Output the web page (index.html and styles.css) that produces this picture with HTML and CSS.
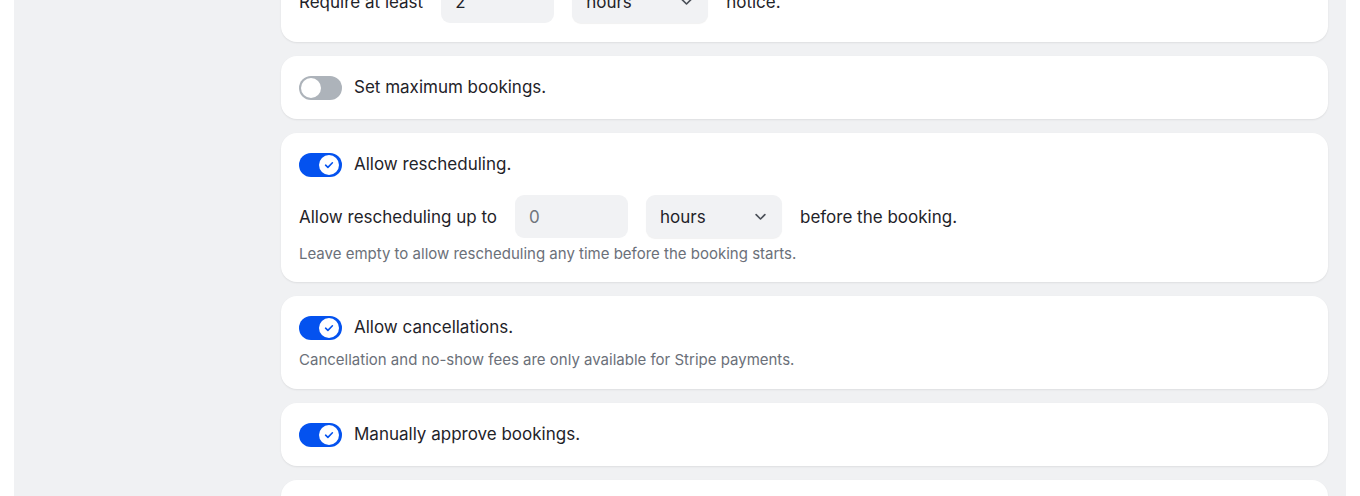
FILE: index.html
```html
<!DOCTYPE html>
<html lang="en">
<head>
  <meta charset="UTF-8" />
  <meta name="viewport" content="width=device-width, initial-scale=1.0"/>
  <title>Booking Settings</title>
  <link rel="stylesheet" href="styles.css">
</head>
<body>

  <div class="page">
    <div class="settings">

      <!-- Notice -->
      <div class="card">
        <div class="card-head">
          <span class="toggle on"><span class="knob"><svg viewBox="0 0 12 12"><path d="M2.6 6.2l2.3 2.2 4.5-4.6"/></svg></span></span>
          <span class="label">Require booking notice.</span>
        </div>
        <div class="field-row">
          <span>Require at least</span>
          <div class="input">2</div>
          <div class="select">hours <svg viewBox="0 0 12 12"><path d="M2.5 4.5l3.5 3.5 3.5-3.5"/></svg></div>
          <span>notice.</span>
        </div>
      </div>

      <!-- Max bookings -->
      <div class="card">
        <div class="card-head">
          <span class="toggle"><span class="knob"></span></span>
          <span class="label">Set maximum bookings.</span>
        </div>
      </div>

      <!-- Rescheduling -->
      <div class="card">
        <div class="card-head">
          <span class="toggle on"><span class="knob"><svg viewBox="0 0 12 12"><path d="M2.6 6.2l2.3 2.2 4.5-4.6"/></svg></span></span>
          <span class="label">Allow rescheduling.</span>
        </div>
        <div class="field-row">
          <span>Allow rescheduling up to</span>
          <div class="input placeholder">0</div>
          <div class="select">hours <svg viewBox="0 0 12 12"><path d="M2.5 4.5l3.5 3.5 3.5-3.5"/></svg></div>
          <span>before the booking.</span>
        </div>
        <p class="help">Leave empty to allow rescheduling any time before the booking starts.</p>
      </div>

      <!-- Cancellations -->
      <div class="card">
        <div class="card-head">
          <span class="toggle on"><span class="knob"><svg viewBox="0 0 12 12"><path d="M2.6 6.2l2.3 2.2 4.5-4.6"/></svg></span></span>
          <span class="label">Allow cancellations.</span>
        </div>
        <p class="help tight">Cancellation and no-show fees are only available for Stripe payments.</p>
      </div>

      <!-- Approval -->
      <div class="card">
        <div class="card-head">
          <span class="toggle on"><span class="knob"><svg viewBox="0 0 12 12"><path d="M2.6 6.2l2.3 2.2 4.5-4.6"/></svg></span></span>
          <span class="label">Manually approve bookings.</span>
        </div>
      </div>

      <div class="card">
        <div class="card-head">
          <span class="toggle"><span class="knob"></span></span>
          <span class="label">Send booking reminders.</span>
        </div>
      </div>

    </div>
  </div>

</body>
</html>
```

FILE: styles.css
```css
* {
  box-sizing: border-box;
}

body {
  font-family: 'Inter', 'Noto Sans', sans-serif;
  background: #fff;
  color: #1f2329;
  margin: 0;
  padding: 0;
  overflow: hidden;
}

.page {
  margin: 0 14px;
  background-color: #f0f1f3;
  min-height: 100vh;
  padding: 0 18px 0 267px;
}

.settings {
  display: flex;
  flex-direction: column;
  gap: 14px;
  margin-top: -82px;
}

.card {
  background: white;
  border-radius: 16px;
  padding: 19px 18px;
  box-shadow: 0 1px 2px rgba(0, 0, 0, 0.08);
}

.card-head {
  display: flex;
  align-items: center;
  gap: 12px;
  min-height: 25px;
}

.label {
  font-size: 17px;
  line-height: 22px;
  margin-top: -2px;
}

/* toggle switch */
.toggle {
  position: relative;
  width: 43px;
  height: 24px;
  border-radius: 12px;
  background-color: #adb3ba;
  flex-shrink: 0;
}

.toggle .knob {
  position: absolute;
  top: 2px;
  left: 2px;
  width: 20px;
  height: 20px;
  border-radius: 50%;
  background: white;
  display: flex;
  align-items: center;
  justify-content: center;
}

.toggle.on {
  background-color: #0452ef;
}

.toggle.on .knob {
  left: 20px;
}

.knob svg {
  width: 12px;
  height: 12px;
  fill: none;
  stroke: #0452ef;
  stroke-width: 1.6;
  stroke-linecap: round;
  stroke-linejoin: round;
}

/* inline field row */
.field-row {
  display: flex;
  align-items: center;
  gap: 18px;
  margin-top: 18px;
  font-size: 17px;
}

.input, .select {
  height: 43px;
  border-radius: 9px;
  background-color: #f1f2f4;
  display: flex;
  align-items: center;
  padding: 0 14px;
  font-size: 17px;
}

.input {
  width: 113px;
}

.input.placeholder {
  color: #70757d;
}

.select {
  width: 136px;
  justify-content: space-between;
  box-shadow: 0 1px 1px rgba(0, 0, 0, 0.06);
}

.select svg {
  width: 15px;
  height: 15px;
  fill: none;
  stroke: #4a4f57;
  stroke-width: 1.3;
  stroke-linecap: round;
  stroke-linejoin: round;
}

.help {
  margin: 5px 0 0;
  padding-top: 1px;
  font-size: 15px;
  line-height: 20px;
  color: #6b7079;
}

.help.tight {
  margin-top: 9px;
}

.card:nth-child(3) {
  padding-bottom: 18px;
}
```
